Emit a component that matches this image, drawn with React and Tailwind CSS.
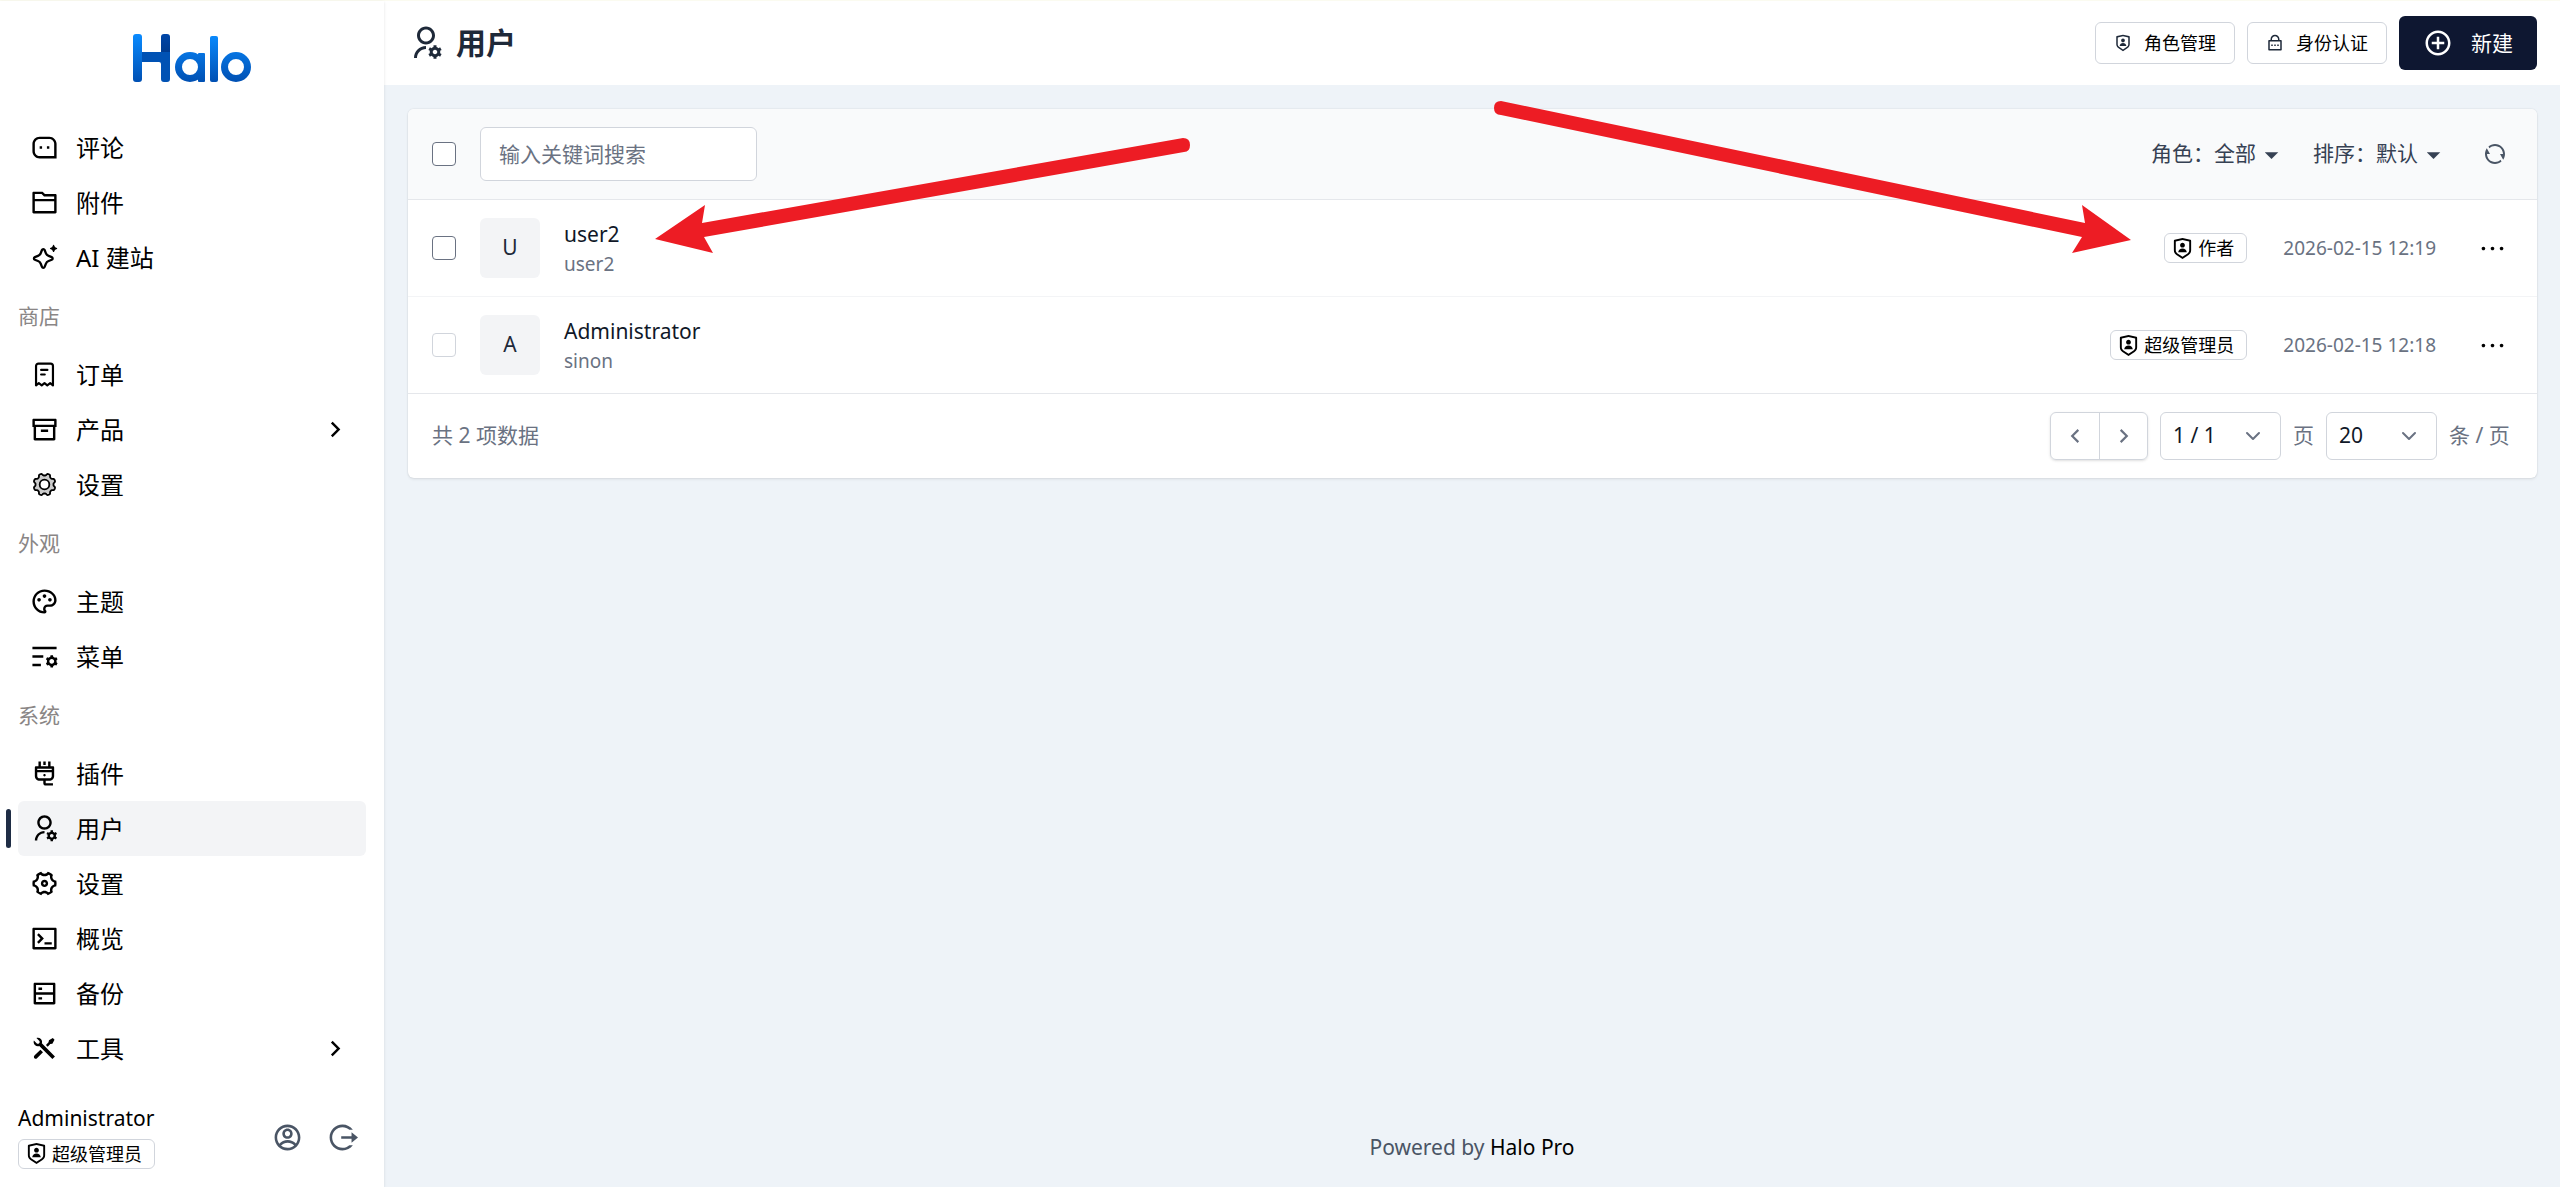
import React, { useState } from "react";
import {
  RiAccountCircleLine,
  RiAddCircleLine,
  RiArchiveLine,
  RiArrowDownSFill,
  RiArrowLeftSLine,
  RiArrowRightSLine,
  RiFolder2Line,
  RiListSettingsLine,
  RiLockPasswordLine,
  RiLogoutCircleRLine,
  RiMessage3Line,
  RiMoreLine,
  RiPaletteLine,
  RiPlug2Line,
  RiRefreshLine,
  RiServerLine,
  RiSettings4Line,
  RiShieldUserLine,
  RiTerminalBoxLine,
  RiToolsFill,
  RiUserSettingsLine,
} from "react-icons/ri";
import { ChevronDown } from "lucide-react";

const ReceiptIcon = ({ className }) => (
  <svg
    viewBox="0 0 24 24"
    fill="none"
    stroke="currentColor"
    strokeWidth="1.8"
    strokeLinecap="round"
    strokeLinejoin="round"
    className={className}
  >
    <path d="M5 21V5a2 2 0 0 1 2-2h10a2 2 0 0 1 2 2v16l-2.3-1.8L14.3 21 12 19.2 9.7 21l-2.4-1.8z" />
    <path d="M9.2 8.2h5.2M9.2 12h3" />
  </svg>
);

const SparkleIcon = ({ className }) => (
  <svg viewBox="0 0 24 24" fill="none" stroke="currentColor" strokeLinejoin="round" className={className}>
    <path
      strokeWidth="1.9"
      d="M11 5c.5 0 .9.3 1.1.8l1 2.6c.4 1.1 1.2 1.900 2.300 2.300l2.600 1c1 .4 1 1.800 0 2.200l-2.600 1c-1.100.4-1.900 1.200-2.300 2.300l-1 2.600c-.4 1-1.800 1-2.200 0l-1-2.600c-.4-1.100-1.200-1.900-2.300-2.300l-2.600-1c-1-.4-1-1.800 0-2.200l2.600-1c1.100-.4 1.900-1.200 2.300-2.300l1-2.600c.2-.5.6-.8 1.100-.8z"
    />
    <path fill="currentColor" strokeWidth="1" d="M19.500 2l.8 1.700 1.700.8-1.700.8-.8 1.700-.8-1.700-1.700-.8 1.700-.8z" />
  </svg>
);

// Outline of an eight-lobed cog, sampled around the circle
const cogPoints = Array.from({ length: 128 }, (_, i) => {
  const angle = (i / 128) * Math.PI * 2;
  const radius = 8.3 - 0.9 * Math.tanh(2 * Math.cos(8 * angle));
  return `${(12 + radius * Math.cos(angle)).toFixed(2)},${(12 + radius * Math.sin(angle)).toFixed(2)}`;
}).join(" ");

const CogIcon = ({ className }) => (
  <svg viewBox="0 0 24 24" stroke="currentColor" strokeWidth="1.5" strokeLinejoin="round" className={className}>
    <polygon points={cogPoints} fill="#cccccc" />
    <circle cx="12" cy="12" r="4" fill="#ffffff" />
  </svg>
);

const menuGroups = [
  {
    items: [
      { name: "评论", icon: RiMessage3Line },
      { name: "附件", icon: RiFolder2Line },
      { name: "AI 建站", icon: SparkleIcon },
    ],
  },
  {
    title: "商店",
    items: [
      { name: "订单", icon: ReceiptIcon },
      { name: "产品", icon: RiArchiveLine, children: true },
      { name: "设置", icon: CogIcon },
    ],
  },
  {
    title: "外观",
    items: [
      { name: "主题", icon: RiPaletteLine },
      { name: "菜单", icon: RiListSettingsLine },
    ],
  },
  {
    title: "系统",
    items: [
      { name: "插件", icon: RiPlug2Line },
      { name: "用户", icon: RiUserSettingsLine, active: true },
      { name: "设置", icon: RiSettings4Line },
      { name: "概览", icon: RiTerminalBoxLine },
      { name: "备份", icon: RiServerLine },
      { name: "工具", icon: RiToolsFill, children: true },
    ],
  },
];

const users = [
  { name: "user2", login: "user2", role: "作者", createdAt: "2026-02-15 12:19", removable: true },
  { name: "Administrator", login: "sinon", role: "超级管理员", createdAt: "2026-02-15 12:18", removable: false },
];

const Logo = () => (
  <svg viewBox="0 0 118 48" className="w-[118px] h-12" role="img" aria-label="Halo">
    <defs>
      <linearGradient id="haloLight" x1="0" y1="0" x2="0" y2="48" gradientUnits="userSpaceOnUse">
        <stop offset="0" stopColor="#0a8bff" />
        <stop offset="1" stopColor="#0050b3" />
      </linearGradient>
      <linearGradient id="haloDark" x1="0" y1="0" x2="0" y2="20" gradientUnits="userSpaceOnUse">
        <stop offset="0" stopColor="#0046a8" />
        <stop offset="1" stopColor="#003a8c" />
      </linearGradient>
    </defs>
    <rect x="28" width="9" height="26" rx="3" fill="url(#haloDark)" />
    <path d="M4 18h33v27a3 3 0 0 1-3 3h-3a3 3 0 0 1-3-3V30a2 2 0 0 0-2-2H4z" fill="#0052b4" />
    <rect width="9" height="48" rx="3" fill="url(#haloLight)" />
    <circle cx="57" cy="33" r="11.5" fill="none" stroke="url(#haloLight)" strokeWidth="7" />
    <rect x="65" y="19" width="7" height="29" rx="1" fill="url(#haloLight)" />
    <rect x="77" y="2" width="8" height="46" rx="2" fill="url(#haloLight)" />
    <circle cx="103" cy="33" r="11.5" fill="none" stroke="url(#haloLight)" strokeWidth="7" />
  </svg>
);

const RoleTag = ({ children }) => (
  <span className="inline-flex h-[30px] items-center gap-1 rounded-md border border-gray-300 bg-white pl-1.5 pr-3 text-lg leading-6 text-black">
    <RiShieldUserLine className="size-[23px]" />
    {children}
  </span>
);

const MenuItem = ({ item }) => {
  const Icon = item.icon;
  return (
    <li className="relative">
      {item.active && <span className="absolute -left-3 top-2 h-[39px] w-[5px] rounded-full bg-[#1f2d45]" />}
      <a
        href="#"
        className={`flex h-[55px] items-center rounded-md px-3 text-2xl text-black ${item.active ? "bg-gray-100" : ""}`}
      >
        <Icon className="size-[29px]" />
        <span className="ml-[17px] flex-1">{item.name}</span>
        {item.children && <RiArrowRightSLine className="mr-1 size-[29px]" />}
      </a>
    </li>
  );
};

const Sidebar = () => (
  <aside className="z-10 flex w-96 shrink-0 flex-col bg-white shadow-sm">
    <div className="flex justify-center pb-[38px] pt-[33px]">
      <Logo />
    </div>
    <nav className="flex-1 px-[18px]">
      {menuGroups.map((group, index) => (
        <div key={index}>
          {group.title && <h2 className="py-[17px] text-[21px] leading-7 text-[#8a8686]">{group.title}</h2>}
          <ul>
            {group.items.map((item) => (
              <MenuItem key={item.name} item={item} />
            ))}
          </ul>
        </div>
      ))}
    </nav>
    <div className="flex items-center justify-between px-[18px] pb-4">
      <div>
        <div className="mb-[7px] text-[21px] leading-7 text-black">Administrator</div>
        <RoleTag>超级管理员</RoleTag>
      </div>
      <div className="mr-2 flex gap-6 text-gray-600">
        <a href="#" aria-label="个人中心">
          <RiAccountCircleLine className="size-[31px]" />
        </a>
        <button type="button" aria-label="退出登录">
          <RiLogoutCircleRLine className="size-[31px]" />
        </button>
      </div>
    </div>
  </aside>
);

const PageHeader = () => (
  <header className="flex h-[84px] items-center justify-between bg-white pl-6 pr-[23px]">
    <h1 className="flex items-center gap-3 text-3xl font-bold text-gray-800">
      <RiUserSettingsLine className="size-9" />
      用户
    </h1>
    <div className="flex items-center gap-3 text-lg text-black">
      <button type="button" className="flex h-[42px] items-center gap-3 rounded-md border border-gray-300 px-[18px]">
        <RiShieldUserLine className="size-[18px] text-gray-800" />
        角色管理
      </button>
      <button type="button" className="flex h-[42px] items-center gap-3 rounded-md border border-gray-300 px-[18px]">
        <RiLockPasswordLine className="size-[18px] text-gray-800" />
        身份认证
      </button>
      <button type="button" className="flex h-[54px] items-center gap-[18px] rounded-md bg-[#0e1731] px-6 text-[21px] text-white">
        <RiAddCircleLine className="size-[30px]" />
        新建
      </button>
    </div>
  </header>
);

const FilterButton = ({ label, value }) => (
  <button type="button" className="flex items-center text-gray-700">
    {label}：{value}
    <RiArrowDownSFill className="ml-0.5 size-[27px]" />
  </button>
);

const Toolbar = ({ keyword, onKeywordChange, allChecked, onCheckAll }) => (
  <div className="flex h-[91px] items-center border-b border-gray-200 bg-gray-50 px-6">
    <input
      type="checkbox"
      aria-label="全选"
      checked={allChecked}
      onChange={onCheckAll}
      className="size-6 appearance-none rounded border border-gray-500 bg-white checked:bg-gray-700"
    />
    <input
      type="text"
      aria-label="搜索"
      value={keyword}
      onChange={(e) => onKeywordChange(e.target.value)}
      placeholder="输入关键词搜索"
      className="ml-6 h-[54px] w-[277px] rounded-md border border-gray-300 bg-white px-[18px] text-[21px] placeholder:text-gray-500"
    />
    <div className="ml-auto flex items-center gap-7">
      <FilterButton label="角色" value="全部" />
      <FilterButton label="排序" value="默认" />
      <button type="button" aria-label="刷新" className="ml-2 mr-1.5 text-gray-600">
        <RiRefreshLine className="size-6" />
      </button>
    </div>
  </div>
);

const UserRow = ({ user, checked, onToggle }) => (
  <li className="flex h-[97px] items-center border-b border-gray-100 px-6 last:border-gray-200">
    <input
      type="checkbox"
      aria-label={user.name}
      checked={checked}
      onChange={onToggle}
      disabled={!user.removable}
      className="size-6 appearance-none rounded border border-gray-500 bg-white checked:bg-gray-700 disabled:border-gray-300"
    />
    <div className="ml-6 flex size-[60px] items-center justify-center rounded-md bg-gray-100 text-gray-800">
      {user.name.charAt(0).toUpperCase()}
    </div>
    <div className="ml-6">
      <a href="#" className="block leading-8 text-gray-900">
        {user.name}
      </a>
      <div className="text-[19px] leading-7 text-gray-500">{user.login}</div>
    </div>
    <div className="ml-auto flex items-center">
      <RoleTag>{user.role}</RoleTag>
      <time className="ml-9 text-[19px] text-gray-500">{user.createdAt}</time>
      <button type="button" aria-label="更多" className="ml-[42px] mr-1.5 text-black">
        <RiMoreLine className="size-[29px]" />
      </button>
    </div>
  </li>
);

const SelectBox = ({ label, value, options, onChange, className }) => (
  <div className={`relative ${className}`}>
    <select
      aria-label={label}
      value={value}
      onChange={(e) => onChange(e.target.value)}
      className="h-12 w-full appearance-none rounded-md border border-gray-300 bg-white px-3 text-gray-900"
    >
      {options.map((option) => (
        <option key={option}>{option}</option>
      ))}
    </select>
    <ChevronDown className="pointer-events-none absolute right-4 top-3 size-6 text-gray-500" />
  </div>
);

const Pagination = ({ total }) => {
  const [page, setPage] = useState("1 / 1");
  const [size, setSize] = useState("20");

  return (
    <div className="flex h-[84px] items-center justify-between px-6 text-gray-500">
      <span>共 {total} 项数据</span>
      <div className="flex items-center gap-3">
        <div className="flex h-12 rounded-md border border-gray-300 shadow-sm">
          <button type="button" aria-label="上一页" className="flex w-12 items-center justify-center">
            <RiArrowLeftSLine className="size-[26px]" />
          </button>
          <button type="button" aria-label="下一页" className="flex w-12 items-center justify-center border-l border-gray-300">
            <RiArrowRightSLine className="size-[26px]" />
          </button>
        </div>
        <SelectBox label="页码" value={page} options={["1 / 1"]} onChange={setPage} className="w-[121px]" />
        <span>页</span>
        <SelectBox label="每页条数" value={size} options={["20", "30", "50", "100"]} onChange={setSize} className="w-[111px]" />
        <span className="w-16">条 / 页</span>
      </div>
    </div>
  );
};

const Arrows = () => (
  <>
    <svg
      viewBox="0 0 540 120"
      className="pointer-events-none absolute left-[247px] top-[28px] z-20 h-[120px] w-[540px]"
      fill="#ed1c24"
      aria-hidden="true"
    >
      <path d="M0 102 50 68l-3 18L528 1q7 0 7 7t-6 7L49 100l9 16z" />
    </svg>
    <svg
      viewBox="0 0 640 160"
      className="pointer-events-none absolute right-[405px] top-[-10px] z-20 h-[160px] w-[640px]"
      fill="#ed1c24"
      aria-hidden="true"
    >
      <path d="M639 141 590 106l3 18L9 2Q2 2 2 9t7 7l581 122-10 16z" />
    </svg>
  </>
);

const UserList = () => {
  const [keyword, setKeyword] = useState("");
  const [selected, setSelected] = useState([]);

  const removable = users.filter((user) => user.removable).map((user) => user.name);
  const visible = users.filter((user) => user.name.includes(keyword));
  const allChecked = removable.length > 0 && selected.length === removable.length;

  const toggle = (name) => {
    setSelected(selected.includes(name) ? selected.filter((n) => n !== name) : [...selected, name]);
  };

  return (
    <div className="relative my-6 ml-6 mr-[23px]">
      <section className="overflow-hidden rounded-md bg-white text-[21px] shadow-[0_0_2px_rgba(0,0,0,0.14),0_2px_3px_rgba(0,0,0,0.05)]">
        <Toolbar
          keyword={keyword}
          onKeywordChange={setKeyword}
          allChecked={allChecked}
          onCheckAll={() => setSelected(allChecked ? [] : removable)}
        />
        <ul>
          {visible.map((user) => (
            <UserRow
              key={user.name}
              user={user}
              checked={selected.includes(user.name)}
              onToggle={() => toggle(user.name)}
            />
          ))}
        </ul>
        <Pagination total={users.length} />
      </section>
      <Arrows />
    </div>
  );
};

const App = () => {
  return (
    <div className="flex min-h-screen border-t border-[#fbfbf0] bg-[#eef3f8] font-['Noto_Sans','Noto_Sans_CJK_SC',sans-serif]">
      <Sidebar />
      <main className="flex min-w-0 flex-1 flex-col">
        <PageHeader />
        <UserList />
        <footer className="mt-auto pb-6 text-center text-[21px] leading-8 text-gray-600">
          Powered by{" "}
          <a href="#" className="text-black">
            Halo Pro
          </a>
        </footer>
      </main>
    </div>
  );
};

export default App;
